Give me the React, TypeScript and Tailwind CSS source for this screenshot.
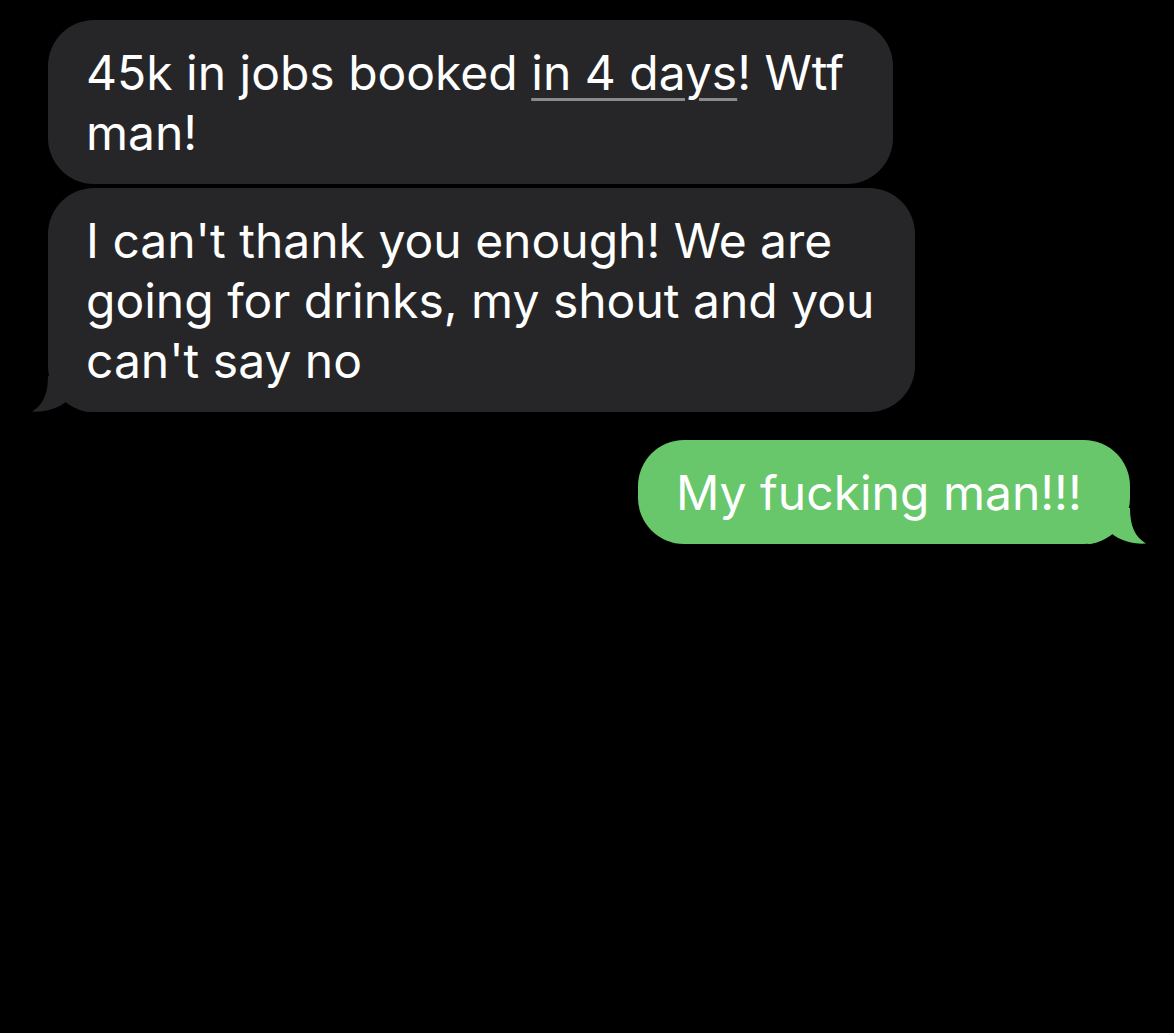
import React from 'react';

const font = { fontFamily: 'Inter, "Noto Sans", sans-serif' };

const TailLeft = () => (
  <svg className="absolute -left-[18px] bottom-0" width="60" height="36" viewBox="0 0 60 36">
    <path d="M18 0 C18 18 13 29 2 35.5 C13 36.5 28 33 37 25 C44 32 51 35.5 60 36 L60 0 Z" fill="#262628" />
  </svg>
);

const TailRight = () => (
  <svg className="absolute -right-[18px] bottom-0" width="60" height="36" viewBox="0 0 60 36">
    <path d="M42 0 C42 18 47 29 58 35.5 C47 36.5 32 33 23 25 C16 32 9 35.5 0 36 L0 0 Z" fill="#67c76a" />
  </svg>
);

export default function App() {
  return (
    <div className="min-h-screen w-full bg-black pt-[20px] pl-[48px] pr-[44px] text-white" style={font}>
      <div className="flex flex-col gap-[4px]">
        <div className="w-[845px] whitespace-nowrap rounded-[46px] bg-[#262628] pt-[23px] pb-[21px] pl-[38px] text-[48px] leading-[60px]">
          45k in jobs booked{' '}
          <span className="underline decoration-[#8a8a8e] decoration-[3px] underline-offset-[8px]">in 4 days</span>! Wtf
          <br />
          man!
        </div>
        <div className="relative w-[867px] whitespace-nowrap rounded-[46px] bg-[#262628] pt-[23px] pb-[21px] pl-[38px] text-[48px] leading-[60px]">
          <TailLeft />
          <span className="relative">
            I can't thank you enough! We are
            <br />
            going for drinks, my shout and you
            <br />
            can't say no
          </span>
        </div>
      </div>
      <div className="mt-[28px] flex justify-end">
        <div className="relative w-[492px] whitespace-nowrap rounded-[46px] bg-[#67c76a] pt-[23px] pb-[21px] pl-[38px] text-[48px] leading-[60px]">
          <TailRight />
          <span className="relative">My fucking man!!!</span>
        </div>
      </div>
    </div>
  );
}
